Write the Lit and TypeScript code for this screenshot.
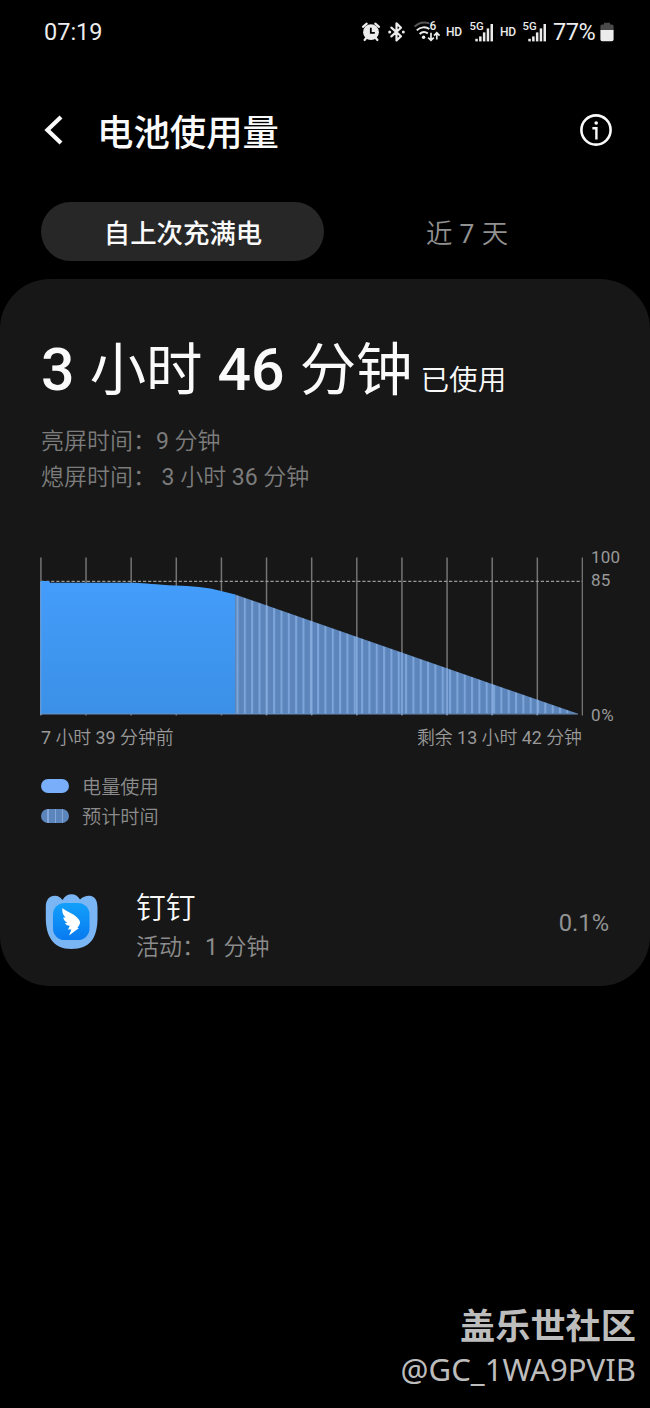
import { LitElement, html, css, svg } from "lit";
import { customElement } from "lit/decorators.js";

const GRID = Array.from({ length: 13 }, (_, i) => 0.9 + i * 45.13);

// Digits keep the regular weight while the surrounding characters are lighter.
const mixed = (text: string) =>
  text.split(/(\d+)/).map((part) => (/^\d/.test(part) ? html`<span class="num">${part}</span>` : part));

@customElement("status-bar")
class StatusBar extends LitElement {
  static styles = css`
    :host { display: flex; align-items: center; justify-content: space-between; height: 64px; padding: 0 36px 0 44px; color: #ececec; font-size: 23.5px; box-sizing: border-box; }
    .icons { display: flex; align-items: center; }
    svg { display: block; overflow: visible; }
    .hd { font-size: 12px; line-height: 20px; width: 16px; font-weight: 500; letter-spacing: -0.3px; }
    .alarm { margin-right: 8px; }
    .bt { margin-right: 9px; }
    .wifi { margin-right: 6px; }
    .sig { margin: 0 6px 0 8px; }
    .last { margin: 0 6px 0 7px; }
    .pct { letter-spacing: -0.4px; width: 47px; white-space: nowrap; }
    text { font-family: Roboto, sans-serif; fill: #ececec; }
  `;
  signal(cls: string) {
    return html`<svg class="sig ${cls}" width="24" height="22" viewBox="0 0 24 22">
      <text x="-.5" y="8.8" font-size="11.3" font-weight="500">5G</text>
      <g fill="#ececec">
        <rect x="5.3" y="17.8" width="2.5" height="2.6" /><rect x="9.1" y="15.4" width="2.5" height="5" />
        <rect x="12.9" y="11.4" width="2.5" height="9" /><rect x="16.7" y="7.4" width="2.5" height="13" />
        <rect x="20.5" y="3" width="2.5" height="17.4" />
      </g></svg>`;
  }
  render() {
    return html`
      <span>07:19</span>
      <div class="icons">
        <svg class="alarm" width="18" height="20" viewBox="0 0 18 20">
          <circle cx="9" cy="10.2" r="7.9" fill="#ececec" />
          <path d="M1 4.8 4.7 1.6M17 4.8 13.3 1.6M4.4 15.8 2.6 18M13.6 15.8 15.4 18" stroke="#ececec" stroke-width="2.2" fill="none" stroke-linecap="round" />
          <path d="M8.8 5.8V10.8H12.8" stroke="#000" stroke-width="1.8" fill="none" />
        </svg>
        <svg class="bt" width="17" height="20" viewBox="0 0 17 20">
          <path d="M3.4 5.6 13 14.2 8.5 18.4V1.4L13 5.8 3.4 14.4" stroke="#ececec" stroke-width="2.2" fill="none" stroke-linejoin="round" stroke-linecap="round" />
          <circle cx="1.7" cy="10" r="1.5" fill="#ececec" /><circle cx="15.3" cy="10" r="1.5" fill="#ececec" />
        </svg>
        <svg class="wifi" width="26" height="20" viewBox="0 0 26 20">
          <path d="M.6 4.6C4.6.8 10.5-.4 15.4 1.4" stroke="#555" stroke-width="2" fill="none" />
          <path d="M2.8 8.4C6.4 4.8 11.6 4.4 15.4 7M5.6 12C8 9.8 11.2 9.6 13.8 11.4" stroke="#ececec" stroke-width="2" fill="none" />
          <circle cx="9.6" cy="15.2" r="1.7" fill="#ececec" />
          <text x="15.6" y="8.4" font-size="12" font-weight="500">6</text>
          <path d="M17 10.8V18M14.2 15.6 17 18.4 19.8 15.6M22.8 17.5V11M20 13.6 22.8 10.8 25.6 13.6" stroke="#ececec" stroke-width="1.7" fill="none" />
        </svg>
        <span class="hd">HD</span>
        ${this.signal("")}
        <span class="hd">HD</span>
        ${this.signal("last")}
        <span class="pct">77%</span>
        <svg width="14" height="20" viewBox="0 0 14 20">
          <path d="M4 .8H10V2.6H12A1.6 1.6 0 0 1 13.6 4.2V8H.4V4.2A1.6 1.6 0 0 1 2 2.6H4Z" fill="#4a4a4a" />
          <path d="M.4 8H13.6V17.4A1.8 1.8 0 0 1 11.8 19.2H2.2A1.8 1.8 0 0 1 .4 17.4Z" fill="#ececec" />
        </svg>
      </div>`;
  }
}

@customElement("battery-chart")
class BatteryChart extends LitElement {
  static styles = css`
    :host { display: block; color: #999; }
    .num { font-weight: 400; }
    .plot { display: flex; height: 160px; }
    svg { display: block; flex: none; }
    .scale { display: flex; flex-direction: column; padding-left: 8px; font-size: 17px; line-height: 20px; letter-spacing: 0.2px; margin-top: -10px; height: 180px; }
    .mid { margin-top: 3px; }
    .zero { margin-top: auto; margin-bottom: 2px; letter-spacing: 0.8px; }
    .range { display: flex; justify-content: space-between; width: 541px; padding-left: 1px; margin-top: 9px; font-size: 17.9px; line-height: 24px; white-space: pre; font-weight: 350; }
  `;
  render() {
    return html`
      <div class="plot">
        <svg width="543" height="160" viewBox="0 0 543 160">
          <defs>
            <linearGradient id="used" x1="0" y1="0" x2="0" y2="1"><stop stop-color="#449dfb" /><stop offset="1" stop-color="#3b90e6" /></linearGradient>
            <pattern id="bars" x="196.5" width="7.33" height="10" patternUnits="userSpaceOnUse">
              <rect width="7.33" height="10" fill="#5c86bb" /><rect width="2" height="10" fill="#7ea5da" />
            </pattern>
          </defs>
          ${GRID.map((x) => svg`<path d="M${x} .5V158.5" stroke="#747474" stroke-width="1.5" />`)}
          <path d="M1 24.3H542" stroke="#999" stroke-width="1.3" stroke-dasharray="3.2 1.9" />
          <path d="M.6 157V24H9L10 25.7H95C105 26 115 27.5 136 28.6C150 29.2 168 30.4 181 34L195.3 37.4V157Z" fill="url(#used)" />
          <path d="M195 157V37.4L538 156.8Z" fill="url(#bars)" />
          ${GRID.slice(5, 12).map((x) => svg`<path d="M${x} ${37.4 + (x - 195) * 0.348}V158" stroke="#86abde" stroke-width="1.5" />`)}
          <path d="M.5 157H538" stroke="#6d8fbd" stroke-width="1" />
          <path d="M.8 25V158" stroke="#6da4e4" stroke-width="1" />
        </svg>
        <div class="scale"><span>100</span><span class="mid">85</span><span class="zero">0%</span></div>
      </div>
      <div class="range"><span>${mixed("7 小时 39 分钟前")}</span><span>${mixed("剩余 13 小时 42 分钟")}</span></div>`;
  }
}

@customElement("app-root")
class AppRoot extends LitElement {
  static styles = css`
    :host { display: flex; flex-direction: column; height: 1408px; background: #000; font-family: Roboto, "Noto Sans CJK SC", sans-serif; color: #fafafa; overflow: hidden; }
    svg { display: block; flex: none; }
    .num { font-weight: 400; }
    header { display: flex; align-items: center; height: 131px; padding: 0 38px 0 44px; }
    .title { flex: 1; margin: 9px 0 0 33px; font-size: 36.4px; font-weight: 500; line-height: 50px; }
    .tabs { display: flex; margin: 7px 40px 18px 41px; height: 59px; line-height: 64px; text-align: center; white-space: pre; }
    .tab { flex: 1; font-size: 26.4px; color: #919191; font-weight: 350; word-spacing: 0.8px; }
    .on { flex: none; width: 283px; background: #272727; border-radius: 30px; color: #fafafa; font-size: 26.4px; font-weight: 500; word-spacing: 0; text-indent: 1px; }
    .card { background: #171717; border-radius: 50px; height: 707px; padding: 49px 41px 0; box-sizing: border-box; }
    .total { font-size: 56.4px; line-height: 84px; height: 84px; white-space: pre; display: flex; align-items: baseline; word-spacing: 1.1px; }
    .total b { font-size: 59px; font-weight: 500; }
    .suffix { font-size: 28.6px; margin-left: 8px; font-weight: 350; }
    .times { margin-top: 12px; font-size: 23px; line-height: 36px; color: #7c7c7c; white-space: pre; font-weight: 350; }
    battery-chart { margin: 61px -41px 0 -1px; }
    .legend { display: grid; grid-template-columns: 28px auto; column-gap: 13px; align-items: center; margin-top: 23px; font-size: 19.2px; line-height: 30px; color: #8c8c8c; font-weight: 350; }
    .sw { height: 14px; border-radius: 7px; background: #78aefa; margin-bottom: 5px; }
    .est { background: repeating-linear-gradient(90deg, #5c86bb 0 6px, #84a8dc 6px 7.5px); }
    .app { display: flex; align-items: center; margin: 52px 0 0 4px; height: 84px; }
    .app > svg { margin-bottom: 10px; }
    .info { flex: 1; margin-left: 38px; }
    .name { font-size: 29.8px; line-height: 42px; font-weight: 350; }
    .sub { font-size: 23px; line-height: 38px; color: #8c8c8c; font-weight: 350; }
    .share { font-size: 23.7px; color: #929292; margin-bottom: 8px; }
    .mark { margin-top: auto; padding: 0 14px 16px 0; text-align: right; color: #bdbdbd; }
    .site { font-size: 35.2px; line-height: 38px; font-weight: 700; }
    .user { font-family: "Noto Sans", sans-serif; font-size: 31.1px; line-height: 46px; }
  `;
  render() {
    return html`
      <status-bar></status-bar>
      <header>
        <svg width="20" height="30" viewBox="0 0 20 30"><path d="M17 2 3.4 15 17 28" stroke="#fafafa" stroke-width="4.2" fill="none" /></svg>
        <span class="title">电池使用量</span>
        <svg width="32" height="32" viewBox="0 0 32 32">
          <circle cx="16" cy="16" r="14.6" stroke="#fafafa" stroke-width="2.6" fill="none" />
          <circle cx="16.2" cy="9" r="1.8" fill="#fafafa" /><path d="M12.4 14.2H16.4V25.5" stroke="#fafafa" stroke-width="2.4" fill="none" />
        </svg>
      </header>
      <div class="tabs"><div class="tab on">自上次充满电</div><div class="tab">${mixed("近 7 天")}</div></div>
      <main class="card">
        <div class="total"><b>3</b> 小时 <b>46</b> 分钟<span class="suffix">已使用</span></div>
        <div class="times"><div>${mixed("亮屏时间：9 分钟")}</div><div>${mixed("熄屏时间： 3 小时 36 分钟")}</div></div>
        <battery-chart></battery-chart>
        <div class="legend"><i class="sw"></i><span>电量使用</span><i class="sw est"></i><span>预计时间</span></div>
        <div class="app">
          <svg width="53" height="56" viewBox="0 0 53 56">
            <defs><linearGradient id="tile" x1="0" y1="0" x2="0" y2="1"><stop stop-color="#12a0fb" /><stop offset="1" stop-color="#087af0" /></linearGradient></defs>
            <path d="M.8 13C.8 6 4 2 10 1.8C13.5 1.8 15.5 3.5 17.5 6C20 2 23 .3 26.5 .3C30 .3 33 2 35 5.5C38 2.5 41 1.5 45 1.7C50.5 2.5 52.5 7 52.5 14V24C52.5 44 45 55 26.5 55C8 55 .8 42 .8 24Z" fill="#7ab5f4" />
            <rect x="8" y="9" width="36.5" height="37" rx="11.5" fill="url(#tile)" />
            <path d="M17.4 14C21 17.5 30 20 33.8 25.4C35.8 28.4 35.4 29.4 32.4 34H34L24 41.4L26.4 35.4H23L24.8 31.8C22.2 31.7 20.6 30.6 20 29L22.6 28.8C20 27.4 18.5 25.5 18.2 23.4L20.6 23.6C17.8 21 16.8 17.5 17.4 14Z" fill="#fff" />
          </svg>
          <div class="info"><div class="name">钉钉</div><div class="sub">${mixed("活动：1 分钟")}</div></div>
          <span class="share">0.1%</span>
        </div>
      </main>
      <footer class="mark"><div class="site">盖乐世社区</div><div class="user">@GC_1WA9PVIB</div></footer>`;
  }
}
